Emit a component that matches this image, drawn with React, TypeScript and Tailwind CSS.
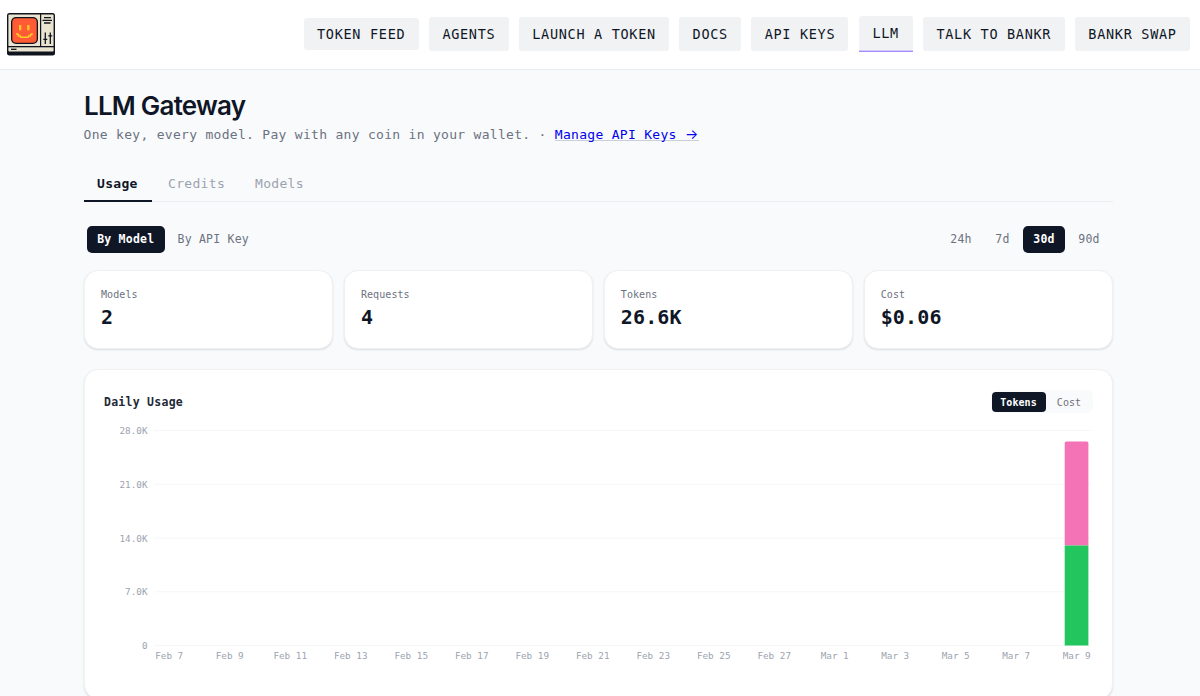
import { useState } from "react";

const navItems = [
  { label: "TOKEN FEED", size: "h-8 w-[115px]" },
  { label: "AGENTS", size: "h-[34px] w-[80px]" },
  { label: "LAUNCH A TOKEN", size: "h-[34px] w-[150px]" },
  { label: "DOCS", size: "h-[34px] w-[62px]" },
  { label: "API KEYS", size: "h-[34px] w-[97px]" },
  { label: "LLM", size: "h-9 w-[54px] rounded-b-none border-b border-[#a78bfa] shadow-[inset_0_-1px_0_#d6c9fb] pb-px" },
  { label: "TALK TO BANKR", size: "h-[34px] w-[142px]" },
  { label: "BANKR SWAP", size: "h-[34px] w-[115px]" },
];

const stats = [
  { label: "Models", value: "2" },
  { label: "Requests", value: "4" },
  { label: "Tokens", value: "26.6K" },
  { label: "Cost", value: "$0.06" },
];

const days = [
  "Feb 7", "Feb 9", "Feb 11", "Feb 13", "Feb 15", "Feb 17", "Feb 19", "Feb 21",
  "Feb 23", "Feb 25", "Feb 27", "Mar 1", "Mar 3", "Mar 5", "Mar 7", "Mar 9",
];

const ticks = ["28.0K", "21.0K", "14.0K", "7.0K", "0"];

function Logo() {
  return (
    <svg width="48" height="43" viewBox="0 0 48 43" aria-label="Bankr">
      <rect x="0" y="0" width="48" height="42.5" rx="2.5" fill="#10141f" />
      <rect x="1.4" y="1.4" width="45.2" height="37.2" rx="1" fill="#e9e4d0" />
      <rect x="1" y="33" width="46" height="1.3" fill="#10141f" />
      <rect x="33" y="1" width="1.2" height="32" fill="#10141f" />
      <rect x="4" y="4" width="27" height="27" rx="5" fill="#10141f" />
      <rect x="5.3" y="5.3" width="24.4" height="24.4" rx="4" fill="#ff5c35" />
      <path d="M12 12h2.3v5.3H12zM20.2 12h2.3v5.3h-2.3z" fill="#ffc928" />
      <path d="M10 20v1.500h1.500v1.500h2v1.300h8v-1.300h2v-1.500h1.500v-1.500" fill="none" stroke="#ffc928" strokeWidth="1.400" />
      <path d="M37 4.600h7M35.500 7.300h9.500M37 10h6.500" stroke="#10141f" strokeWidth="1.300" />
      <path d="M38.300 19.500v11.500M43.300 19.500v11.500M36.300 26.300h4M41.300 22.800h4" stroke="#10141f" strokeWidth="1.300" />
      <path d="M4 36.300h5.500" stroke="#10141f" strokeWidth="1.300" />
    </svg>
  );
}

function UsageChart() {
  return (
    <svg width="989" height="250" viewBox="0 0 989 250" className="block">
      {ticks.map((tick, i) => (
        <g key={tick}>
          <line x1="50" x2="987" y1={10.5 + i * 53.75} y2={10.5 + i * 53.75} stroke="#f5f6f8" />
          <text x="43.5" y={14 + i * 53.75} textAnchor="end" className="fill-[#9ca3af] text-[9.3px]">
            {tick}
          </text>
        </g>
      ))}
      <path d="M960.7 125.5V23q0-1.5 1.5-1.5h20.7q1.5 0 1.5 1.5v102.5z" fill="#f472b6" />
      <rect x="960.7" y="125.5" width="23.7" height="100" fill="#22c55e" />
      {days.map((day, i) => (
        <text key={day} x={65.2 + i * 60.5} y="239" textAnchor="middle" className="fill-[#9ca3af] text-[9.3px]">
          {day}
        </text>
      ))}
    </svg>
  );
}

export default function App() {
  const [range, setRange] = useState("30d");
  return (
    <div className="flex h-[696px] w-[1200px] flex-col overflow-hidden bg-[#f9fafc] font-['DejaVu_Sans_Mono',monospace] text-[#0f1626]">
      <header className="flex h-[70px] shrink-0 items-center justify-between border-b border-[#e9ebee] bg-white pr-[10px] pb-px pl-[7px]">
        <Logo />
        <nav className="flex items-center gap-[10.2px]">
          {navItems.map((item) => (
            <a
              key={item.label}
              className={`flex shrink-0 items-center justify-center rounded-[3px] bg-[#f1f2f4] text-[13.5px] tracking-[0.7px] whitespace-nowrap ${item.size}`}
            >
              {item.label}
            </a>
          ))}
        </nav>
      </header>

      <main className="ml-[84px] w-[1029px]">
        <h1 className="mt-[20px] h-[32px] font-['Inter',sans-serif] text-[26px] leading-[32px] font-semibold tracking-[-0.78px] whitespace-nowrap">
          LLM Gateway
        </h1>
        <p className="mt-[3px] -ml-[0.5px] flex h-[20px] text-[13px] leading-[20px] tracking-[0.3px] whitespace-nowrap text-[#6b7280]">
          <span className="mr-[8.1px]">One key, every model. Pay with any coin in your wallet. ·</span>
          <a className="h-[16px] border-b border-[#c9ced8] leading-[20px] text-[#0000ee]">
            Manage API Keys{" "}
            <span className="inline-block w-[14px] font-['Inter',sans-serif] text-[14px] leading-[17px] tracking-normal">→</span>
          </a>
        </p>

        <div className="mt-[20px] flex h-[37px] border-b border-[#eceef1] text-[13px] leading-[37px] tracking-[0.32px] text-[#9ca3af]">
          <span className="-mb-px w-[68px] border-b-2 border-[#0f1626] pl-[13px] font-bold text-[#0f1626]">Usage</span>
          <span className="ml-4">Credits</span>
          <span className="ml-[30px]">Models</span>
        </div>

        <div className="mt-[24px] flex h-[27px] items-center justify-between text-[11.5px] leading-[27px] tracking-[0.22px] text-[#6b7280]">
          <div className="ml-[3px] flex">
            <span className="w-[77.5px] rounded-[5px] bg-[#0f1626] text-center font-bold text-white">By Model</span>
            <span className="ml-[13px]">By API Key</span>
          </div>
          <div className="flex">
            {[
              { label: "24h", width: "w-[42px]" },
              { label: "7d", width: "w-[41px]" },
              { label: "30d", width: "w-[42px]" },
              { label: "90d", width: "w-[48px]" },
            ].map((r) => (
              <button
                key={r.label}
                onClick={() => setRange(r.label)}
                className={`${r.width} rounded-[5px] ${range === r.label ? "bg-[#0f1626] font-bold text-white" : ""}`}
              >
                {r.label}
              </button>
            ))}
          </div>
        </div>

        <div className="mt-[17px] grid grid-cols-4 gap-[10.6px]">
          {stats.map((s) => (
            <div
              key={s.label}
              className="h-[79px] rounded-[14px] border border-[#f0f1f3] bg-white px-4 pt-[17px] shadow-[0_1px_2px_rgba(0,0,0,0.12)]"
            >
              <div className="text-[10px] leading-[14px] tracking-[0.08px] text-[#6b7280]">{s.label}</div>
              <div className="mt-[2px] text-[20px] leading-[26px] font-bold tracking-[0.14px]">{s.value}</div>
            </div>
          ))}
        </div>

        <section className="mt-[20px] h-[330px] rounded-[14px] border border-[#f0f1f3] bg-white px-[19px] pt-[20px] shadow-[0_1px_2px_rgba(0,0,0,0.12)]">
          <div className="flex h-[23px] items-center justify-between">
            <h2 className="pt-0.5 text-[11.5px] font-bold tracking-[0.26px] text-[#1f2937]">Daily Usage</h2>
            <div className="mr-[0.5px] flex h-[23px] items-center rounded-md bg-[#f9fafb] pl-px text-[10px] leading-[20px] tracking-[0.08px] text-[#6b7280]">
              <span className="h-5 w-[54px] rounded-[4px] bg-[#0f1626] text-center leading-[21px] font-bold text-white">Tokens</span>
              <span className="h-5 w-[47px] text-center leading-[21px]">Cost</span>
            </div>
          </div>
          <div className="mt-[7px]">
            <UsageChart />
          </div>
        </section>
      </main>
    </div>
  );
}
